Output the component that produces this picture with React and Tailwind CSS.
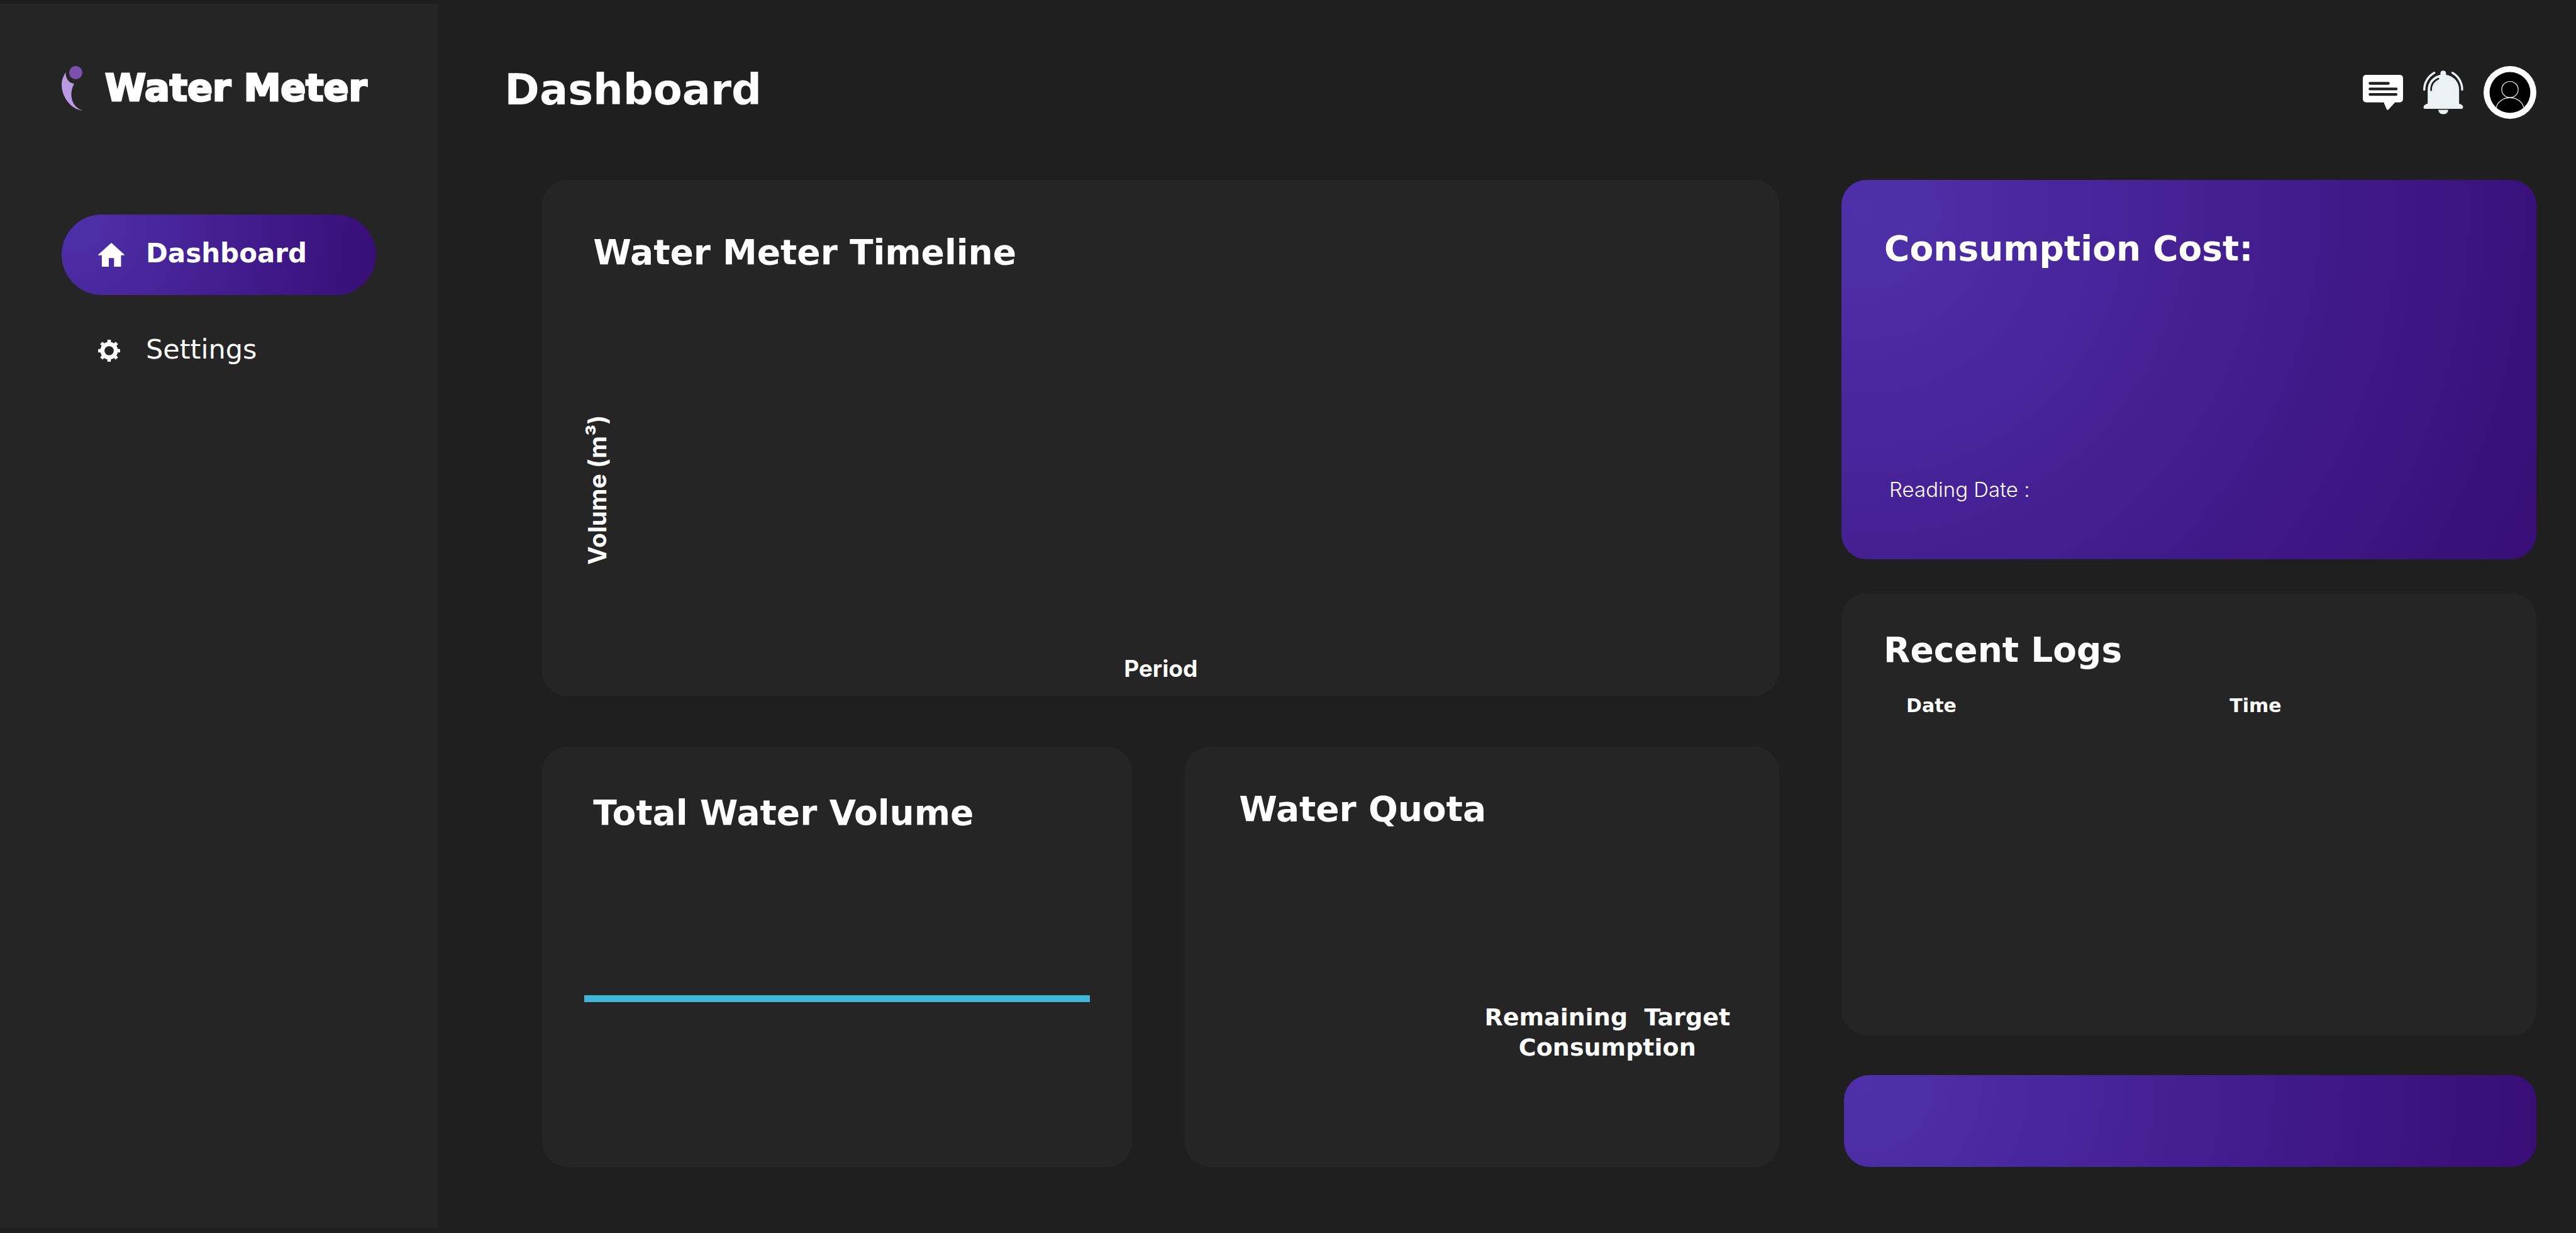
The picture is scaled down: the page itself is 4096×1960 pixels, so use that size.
const GRADIENT =
  "bg-[radial-gradient(circle_at_3%_8%,#4e31aa_0%,#431e90_50%,#380d75_100%)]";

function LogoMark() {
  return (
    <svg viewBox="86 128 94 249" preserveAspectRatio="none" className="h-[71px] w-[33px] shrink-0" aria-hidden="true">
      <ellipse cx="150" cy="165" rx="30" ry="37" fill="#7b52ab" />
      <path
        d="M104 162C96 180 86 204 86 230C86 300 126 368 181 377C148 362 130 330 130 287C130 266 134 246 143 227C122 222 104 204 104 162Z"
        fill="#bb99e4"
      />
    </svg>
  );
}

function HomeIcon() {
  return (
    <svg viewBox="223 243 121 132" preserveAspectRatio="none" className="h-[38px] w-[42px]" aria-hidden="true">
      <path
        d="M284 243L344 309V312H328V375H296V327H272V375H240V312H223V309Z"
        fill="#fff"
      />
    </svg>
  );
}

function GearIcon() {
  return (
    <svg viewBox="-50 -50 100 100" className="h-[35px] w-[35px]" aria-hidden="true">
      <g fill="#fff">
        {[0, 45, 90, 135].map((a) => (
          <rect key={a} x="-8" y="-50" width="16" height="100" rx="2" transform={`rotate(${a})`} />
        ))}
        <circle r="40" />
      </g>
      <circle r="21" fill="#252525" />
    </svg>
  );
}

function ChatIcon() {
  return (
    <svg viewBox="123 144 225 196" className="h-[56px] w-[64px]" aria-hidden="true">
      <path
        d="M143 144H328Q348 144 348 164V277Q348 297 328 297H303L268 336Q261 343 256 335L240 297H143Q123 297 123 277V164Q123 144 143 144Z"
        fill="#fff"
      />
      <path d="M163 191H266M163 222H310M163 253H309" stroke="#1f1f1f" strokeWidth="15" strokeLinecap="round" />
    </svg>
  );
}

function BellIcon() {
  return (
    <svg viewBox="468 121 224 244" className="h-[70px] w-[64px]" aria-hidden="true">
      <path
        d="M564 144V137Q564 121 579 121Q595 121 595 137V144C640 152 668 186 668 228V305Q690 311 690 325Q690 334 682 334H479Q470 334 470 325Q470 311 493 305V228C493 186 522 152 564 144Z"
        fill="#ecf1f4"
      />
      <path d="M552 339H608Q604 364 580 364Q556 364 552 339Z" fill="#ecf1f4" />
      <path d="M474 227C474 186 498 151 530 134M685 227C685 186 662 151 631 134" fill="none" stroke="#ecf1f4" strokeWidth="12" strokeLinecap="round" />
      <path d="M512 231C511 200 526 178 553 166" fill="none" stroke="#1f1f1f" strokeWidth="9" strokeLinecap="round" />
    </svg>
  );
}

function AvatarIcon() {
  return (
    <svg viewBox="797 95 295 295" className="h-[84px] w-[84px]" aria-hidden="true">
      <circle cx="944.5" cy="242.5" r="147.5" fill="#fff" />
      <circle cx="944.5" cy="242.5" r="114" fill="#000" />
      <g fill="none" stroke="#fff" strokeWidth="4">
        <ellipse cx="944.5" cy="226" rx="46" ry="45" />
        <path d="M868 326C876 293 908 272 944.5 272C981 272 1013 293 1021 326" />
      </g>
    </svg>
  );
}

function NavItem({ icon, label, active }) {
  return (
    <a
      href="#"
      aria-current={active ? "page" : undefined}
      className={`flex h-32 items-center gap-[34px] rounded-full pl-[58px] leading-[48px] ${
        active ? `text-[42px] font-bold ${GRADIENT}` : "text-[43px] font-normal"
      }`}
    >
      <span className="flex w-[42px] shrink-0">{icon}</span>
      <span className="pb-1">{label}</span>
    </a>
  );
}

function Card({ className, children }) {
  return <section className={`flex flex-col rounded-[40px] ${className}`}>{children}</section>;
}

function CardTitle({ children }) {
  return <h2 className="text-[55px] leading-[64px] font-bold">{children}</h2>;
}

export default function App() {
  return (
    <div className="flex min-h-screen bg-[#1f1f1f] font-['DejaVu_Sans',sans-serif] text-white">
      <aside className="mt-[6px] mb-2 w-[17%] shrink-0 bg-[#252525] px-[98px] pt-[98px]">
        <div className="flex items-center gap-9">
          <LogoMark />
          <span className="text-[59px] leading-[72px] font-bold whitespace-nowrap [-webkit-text-stroke:3px_white]">
            Water Meter
          </span>
        </div>
        <nav className="mt-[165px] flex flex-col gap-6">
          <NavItem icon={<HomeIcon />} label="Dashboard" active />
          <NavItem icon={<GearIcon />} label="Settings" />
        </nav>
      </aside>

      <main className="flex min-w-0 flex-1 flex-col pt-[103px] pr-[63px] pb-[105px]">
        <header className="flex items-center justify-between pl-[106px]">
          <h1 className="pb-2 text-[67px] leading-[80px] font-bold">Dashboard</h1>
          <div className="flex items-center gap-8">
            <button type="button" aria-label="Messages">
              <ChatIcon />
            </button>
            <button type="button" aria-label="Notifications">
              <BellIcon />
            </button>
            <button type="button" aria-label="Profile">
              <AvatarIcon />
            </button>
          </div>
        </header>

        <div className="mt-[95px] grid flex-1 grid-cols-[1967fr_1105fr] gap-[99px] pl-[166px]">
          <div className="grid grid-rows-[820fr_668fr] gap-[81px]">
            <Card className="bg-[#252525] pt-[83px] pb-[19px]">
              <div className="pl-[81px]">
                <CardTitle>Water Meter Timeline</CardTitle>
              </div>
              <div className="flex flex-1 items-center pt-[85px] pl-[64px] font-['Inter',sans-serif] text-[39px] leading-[48px] font-bold">
                <span className="rotate-180 [writing-mode:vertical-rl]">Volume (m³)</span>
              </div>
              <p className="text-center font-['Inter',sans-serif] text-[37px] leading-[48px] font-bold">Period</p>
            </Card>

            <div className="grid grid-cols-[938fr_945fr] gap-[84px]">
              <Card className="bg-[#252525] px-[67px] pt-[73px] pb-[262px]">
                <div className="pl-[14px]">
                  <CardTitle>Total Water Volume</CardTitle>
                </div>
                <hr className="mt-auto h-[11px] border-0 bg-[#41b5d8]" />
              </Card>
              <Card className="bg-[#252525] pt-[67px] pr-[78px] pb-[166px] pl-[86px]">
                <CardTitle>Water Quota</CardTitle>
                <p className="mt-auto self-end text-center text-[38px] leading-[48px] font-bold">
                  Remaining&nbsp; Target
                  <br />
                  Consumption
                </p>
              </Card>
            </div>
          </div>

          <div className="grid grid-rows-[603fr_703fr_155fr] gap-[54px]">
            <Card className={`px-[68px] pt-[77px] pb-[91px] ${GRADIENT}`}>
              <CardTitle>Consumption Cost:</CardTitle>
              <p className="mt-auto pl-2 font-['Inter',sans-serif] text-[33px] leading-[40px] font-light">
                Reading Date :
              </p>
            </Card>
            <Card className="bg-[#252525] px-[67px] pt-[58px]">
              <CardTitle>Recent Logs</CardTitle>
              <table className="mt-[39px] ml-9 table-fixed text-left text-[30px] leading-[36px] font-bold">
                <thead>
                  <tr>
                    <th scope="col" className="w-[55%]">Date</th>
                    <th scope="col">Time</th>
                  </tr>
                </thead>
              </table>
            </Card>
            <button
              type="button"
              aria-label="View report"
              className={`mt-[9px] ml-1 rounded-[40px] ${GRADIENT}`}
            />
          </div>
        </div>
      </main>
    </div>
  );
}
